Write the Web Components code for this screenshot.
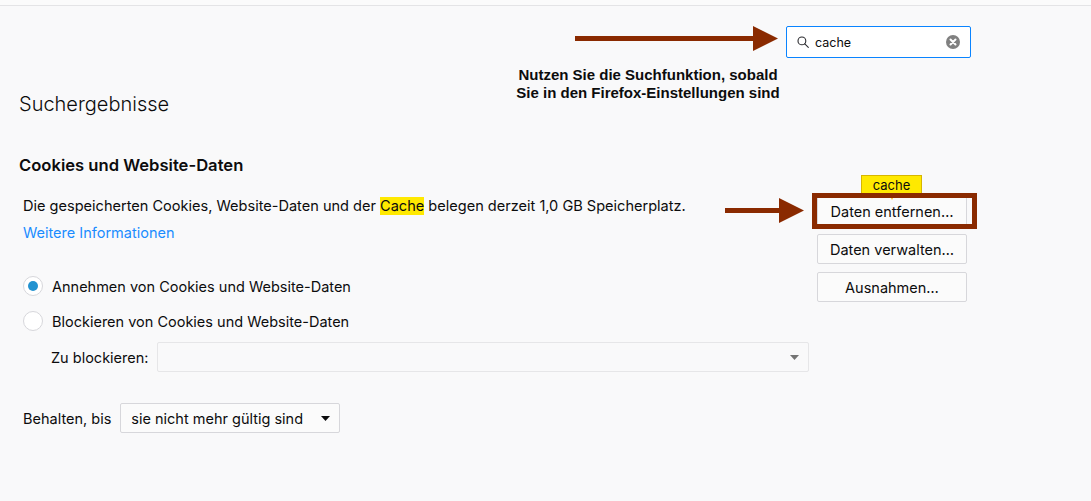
<!DOCTYPE html>
<html lang="de"><head><meta charset="utf-8"><title>Firefox-Einstellungen</title>
<style>
html,body{margin:0;height:100%}
body{background:#f9f9fa;font-family:Inter,"Liberation Sans",sans-serif;color:#0c0c0d;overflow:hidden}
</style></head><body>
<fx-page></fx-page>
<script>
function def(name,html,init){
  customElements.define(name,class extends HTMLElement{
    constructor(){super();this.attachShadow({mode:'open'}).innerHTML=html;}
    connectedCallback(){init&&init(this)}
  });
}
const FONT='font-family:Inter,"Liberation Sans",sans-serif;font-size:14.5px;letter-spacing:0;';
def('fx-arrow',`<style>:host{position:absolute;display:block;line-height:0}svg{display:block}</style>
<svg width="100%" height="100%" preserveAspectRatio="none"><polygon fill="#8a2a00"/></svg>`,el=>{
  const w=+el.getAttribute('w'),h=+el.getAttribute('h'),t=+el.getAttribute('t')||4,hw=+el.getAttribute('head')||25;
  el.style.width=w+'px';el.style.height=h+'px';
  const s=el.shadowRoot.querySelector('svg');s.setAttribute('viewBox',`0 0 ${w} ${h}`);
  const m=h/2;
  s.querySelector('polygon').setAttribute('points',`0,${m-t/2} ${w-hw},${m-t/2} ${w-hw},0 ${w},${m} ${w-hw},${h} ${w-hw},${m+t/2} 0,${m+t/2}`);
});
def('fx-search',`<style>
:host{display:flex;align-items:center;box-sizing:border-box;width:185px;height:32px;background:#fff;border:1px solid #0a84ff;border-radius:2px;padding:0 10px;gap:6px;${FONT}font-size:12.5px;color:#0c0c0d}
span{flex:1;margin-top:1px}
svg{display:block;flex:none}
</style>
<svg width="12" height="12" viewBox="0 0 12 12" fill="none" stroke="#2a2a2e" stroke-width="1.1"><circle cx="4.9" cy="4.9" r="3.9"/><path d="M7.8 7.8l3.5 3.5" stroke-linecap="round"/></svg>
<span><slot></slot></span>
<svg width="14" height="14" viewBox="0 0 14 14"><circle cx="7" cy="7" r="7" fill="#808080"/><path d="M4.5 4.5l5 5M9.5 4.5l-5 5" stroke="#fff" stroke-width="2" stroke-linecap="round"/></svg>`);
def('fx-button',`<style>
:host{display:flex;align-items:center;justify-content:center;box-sizing:border-box;width:150px;height:30px;background:#fbfbfb;border:1px solid #d7d7db;border-radius:2px;${FONT}color:#0c0c0d}
</style><slot></slot>`);
def('fx-radio',`<style>
:host{display:flex;align-items:center;gap:9px;height:20px;${FONT}}
i{box-sizing:border-box;width:20px;height:20px;border:1px solid #d7d7db;border-radius:50%;background:#fff;display:flex;align-items:center;justify-content:center;flex:none}
:host([checked]) i::after{content:"";width:10px;height:10px;border-radius:50%;background:#2292d0}
</style><i></i><span><slot></slot></span>`);
def('fx-select',`<style>
:host{display:flex;align-items:center;justify-content:space-between;box-sizing:border-box;height:30px;border:1px solid #d7d7db;border-radius:2px;padding:0 9px 0 10px;${FONT}color:#0c0c0d;background:#fbfbfb}
svg{display:block;flex:none}
:host([disabled]){background:#f9f9fa;border-color:#e6e6e8}
:host([disabled]) polygon{fill:#737373}
</style><span><slot></slot></span><svg width="9" height="5" viewBox="0 0 9 5"><polygon points="0,0 9,0 4.5,5" fill="#0c0c0d"/></svg>`);
def('fx-tooltip',`<style>
:host{position:absolute;left:861px;top:175px;box-sizing:border-box;width:61px;height:19px;background:#ffe900;border:1px solid #d7b600;display:flex;align-items:center;justify-content:center;${FONT}font-size:13px;color:#0c0c0d}
:host::after{content:"";position:absolute;left:27px;top:17px;border:3px solid transparent;border-top:7px solid #ffb800;border-bottom:0}
</style><slot></slot>`);
def('fx-cookies',`<style>
:host{display:block;${FONT}}
h2{margin:-1px 0 0;font-size:16.6px;font-weight:600;line-height:20px;padding-left:19px}
.row{display:flex;justify-content:space-between;padding:0 124px 0 23px;margin-top:21px}
.left{width:786px}
p{margin:0;line-height:20px;white-space:nowrap;font-size:14.55px}
mark{background:#ffe900;color:inherit}
a{display:block;color:#1a8cff;margin-top:7px;line-height:20px}
.btns{display:flex;flex-direction:column;gap:8px}
.radios{display:flex;flex-direction:column;gap:15px;margin-top:33px}
.block{display:flex;align-items:center;gap:9px;margin:11px 0 0 28px}
.block fx-select{flex:1}
.keep{display:flex;align-items:center;gap:9px;margin-top:31px}
.keep fx-select{width:220px}
</style>
<h2>Cookies und Website-Daten</h2>
<div class="row">
  <div class="left">
    <p>Die gespeicherten Cookies, Website-Daten und der <mark>Cache</mark> belegen derzeit 1,0 GB Speicherplatz.</p>
    <a>Weitere Informationen</a>
    <div class="radios">
      <fx-radio checked>Annehmen von Cookies und Website-Daten</fx-radio>
      <fx-radio>Blockieren von Cookies und Website-Daten</fx-radio>
    </div>
    <div class="block"><span>Zu blockieren:</span><fx-select disabled></fx-select></div>
    <div class="keep"><span>Behalten, bis</span><fx-select>sie nicht mehr gültig sind</fx-select></div>
  </div>
  <div class="btns">
    <fx-button>Daten entfernen…</fx-button>
    <fx-button>Daten verwalten…</fx-button>
    <fx-button>Ausnahmen…</fx-button>
  </div>
</div>`);
def('fx-page',`<style>
:host{display:block;position:relative;width:1091px;height:501px;overflow:hidden}
.top{height:5px;background:#fbfbfb;border-bottom:1px solid #e4e4e6}
.head{display:flex;justify-content:flex-end;padding:20px 120px 0 0}
.note{margin:8px 0 0 498px;width:300px;text-align:center;font:bold 15px/18px "Liberation Sans",Arial,sans-serif;color:#0c0c0d}
h1{margin:-12px 0 0;padding-left:19px;font-size:20px;font-weight:300;line-height:28px;color:#0c0c0d}
fx-cookies{margin-top:38px}
.box{position:absolute;left:812px;top:193px;width:165px;height:36px;box-sizing:border-box;border:5px solid #8a2a00}
</style>
<div class="top"></div>
<div class="head"><fx-search>cache</fx-search></div>
<p class="note">Nutzen Sie die Suchfunktion, sobald<br>Sie in den Firefox-Einstellungen sind</p>
<h1>Suchergebnisse</h1>
<fx-cookies></fx-cookies>
<fx-arrow w="203" h="25" t="5" head="25" style="left:575px;top:26px"></fx-arrow>
<fx-tooltip>cache</fx-tooltip>
<div class="box"></div>
<fx-arrow w="79" h="25" t="5" head="25" style="left:725px;top:198px"></fx-arrow>`);
</script></body></html>
